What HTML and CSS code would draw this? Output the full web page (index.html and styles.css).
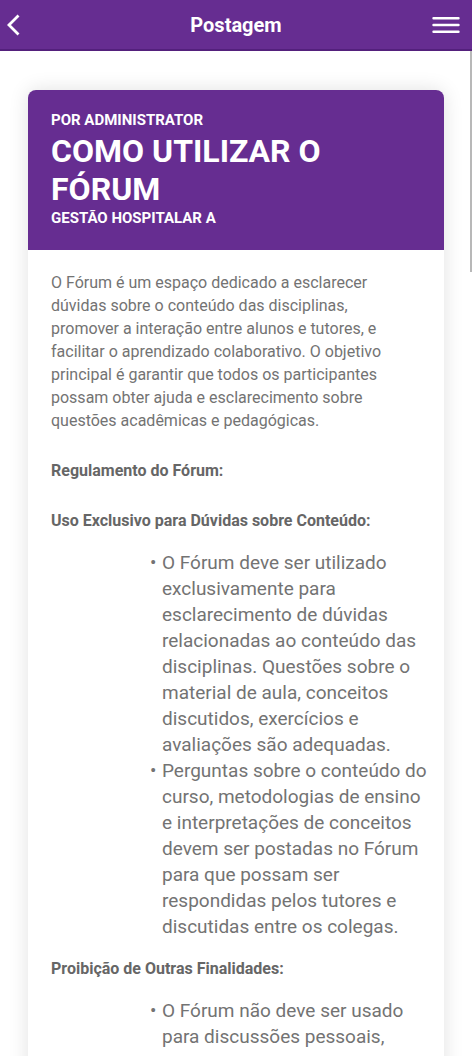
FILE: index.html
```html
<!DOCTYPE html>
<html lang="pt-BR">
<head>
  <meta charset="UTF-8">
  <meta name="viewport" content="width=device-width, initial-scale=1">
  <title>Postagem</title>
  <link rel="stylesheet" href="styles.css">
</head>
<body>
  <header class="topbar">
    <button class="icon-btn" type="button" aria-label="Voltar">
      <svg width="14" height="24" viewBox="0 0 14 24" fill="none" stroke="#fff" stroke-width="2.8"><path d="M12.5 2.6 3 12l9.5 9.4"/></svg>
    </button>
    <h1 class="topbar-title">Postagem</h1>
    <button class="icon-btn" type="button" aria-label="Menu">
      <svg width="28" height="24" viewBox="0 0 28 24" fill="none" stroke="#fff" stroke-width="2.4" stroke-linecap="round"><path d="M1.5 5.3h25M1.5 12h25M1.5 18.7h25"/></svg>
    </button>
  </header>

  <main class="content">
    <div class="scroll-thumb"></div>
    <article class="card">
      <div class="card-header">
        <p class="meta">POR ADMINISTRATOR</p>
        <h2>COMO UTILIZAR O FÓRUM</h2>
        <p class="meta">GESTÃO HOSPITALAR A</p>
      </div>
      <div class="card-body">
        <p>O Fórum é um espaço dedicado a esclarecer dúvidas sobre o conteúdo das disciplinas, promover a interação entre alunos e tutores, e facilitar o aprendizado colaborativo. O objetivo principal é garantir que todos os participantes possam obter ajuda e esclarecimento sobre questões acadêmicas e pedagógicas.</p>
        <p><b>Regulamento do Fórum:</b></p>
        <h3>Uso Exclusivo para Dúvidas sobre Conteúdo:</h3>
        <ul>
          <li>O Fórum deve ser utilizado exclusivamente para esclarecimento de dúvidas relacionadas ao conteúdo das disciplinas. Questões sobre o material de aula, conceitos discutidos, exercícios e avaliações são adequadas.</li>
          <li>Perguntas sobre o conteúdo do curso, metodologias de ensino e interpretações de conceitos devem ser postadas no Fórum para que possam ser respondidas pelos tutores e discutidas entre os colegas.</li>
        </ul>
        <h3>Proibição de Outras Finalidades:</h3>
        <ul>
          <li>O Fórum não deve ser usado para discussões pessoais,</li>
        </ul>
      </div>
    </article>
  </main>
</body>
</html>
```
FILE: styles.css
```css
* { box-sizing: border-box; }
body { margin: 0; height: 100vh; display: flex; flex-direction: column; overflow: hidden; background: #fff; color: #737373; font-family: Roboto, "Liberation Sans", sans-serif; font-size: 16px; line-height: 23px; }
h1, h2, h3, p, ul { margin: 0; padding: 0; }

.topbar { flex: none; height: 51px; padding: 0 6px; display: grid; grid-template-columns: 34px 1fr 34px; align-items: center; background: #662d91; border-bottom: 2px solid #53207c; color: #fff; }
.topbar-title { font-size: 20px; line-height: 24px; font-weight: 700; text-align: center; }
.icon-btn { display: flex; padding: 0; border: 0; background: none; cursor: pointer; }

.content { position: relative; flex: 1; min-height: 0; padding: 39px 28px 0; overflow: hidden; }
.scroll-thumb { position: absolute; top: 0; right: 0; width: 2px; height: 22%; background: #b8b8b8; }

.card { min-height: 100%; border-radius: 8px; background: #fff; box-shadow: 0 0 20px rgba(0, 0, 0, 0.12); overflow: hidden; }
.card-header { padding: 20px 23px 22px; background: #662d91; color: #fff; }
.card-header h2 { margin-top: 2px; font-size: 32px; line-height: 38px; }
.meta { font-size: 15px; line-height: 20px; font-weight: 700; }

.card-body { padding: 21px 15px 21px 23px; }
.card-body p { margin: 0 16px 27px 0; }
.card-body b, h3 { font-weight: 700; color: #666; }
h3 { margin-bottom: 18px; font-size: 16px; line-height: 23px; }
ul { margin-bottom: 17px; padding-left: 111px; list-style: none; font-size: 19px; line-height: 26px; }
li { position: relative; }
li::before { content: "•"; position: absolute; left: -12px; }
```
